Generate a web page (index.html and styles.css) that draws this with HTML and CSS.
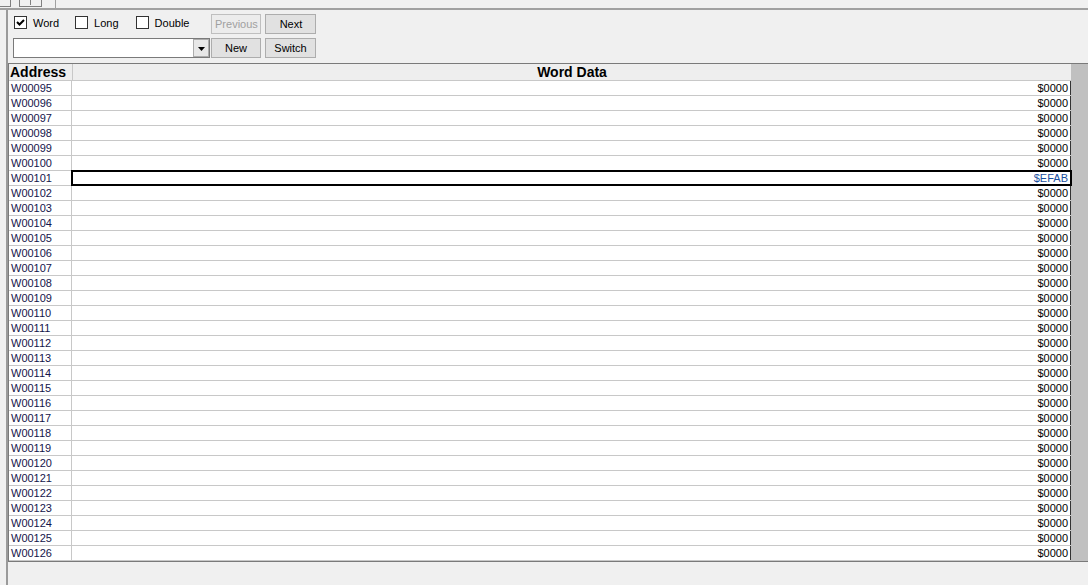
FILE: index.html
```html
<!DOCTYPE html>
<html>
<head>
<meta charset="utf-8">
<link rel="stylesheet" href="styles.css">
</head>
<body>
<div class="topstrip">
  <span class="tab tab1"></span>
  <span class="tab tab2"><i></i></span>
  <span class="vline"></span>
</div>
<div class="main">
  <div class="toolbar">
    <div class="tb-row">
      <label class="chk"><span class="box checked"><svg viewBox="0 0 11 11" width="11" height="11"><path d="M2 5 L4.5 7.5 L9 3" fill="none" stroke="#000" stroke-width="2"/></svg></span>Word</label>
      <label class="chk chk-long"><span class="box"></span>Long</label>
      <label class="chk chk-double"><span class="box"></span>Double</label>
      <button class="btn disabled">Previous</button>
      <button class="btn">Next</button>
    </div>
    <div class="tb-row row2">
      <div class="combo"><span class="combo-arrow"><svg viewBox="0 0 7 4" width="7" height="4"><path d="M0 0 H7 L3.5 4 Z" fill="#000"/></svg></span></div>
      <button class="btn">New</button>
      <button class="btn">Switch</button>
    </div>
  </div>
  <div class="grid">
    <div class="grid-body">
      <div class="hdr">
        <div class="c-addr">Address</div>
        <div class="c-data">Word Data</div>
      </div>
      <div id="rows"></div>
    </div>
    <div class="scroll"></div>
  </div>
</div>
<script src="app.js"></script>
</body>
</html>
```
FILE: app.js
```js
var rows = document.getElementById('rows');
var html = '';
for (var i = 95; i <= 126; i++) {
  var a = 'W' + String(i).padStart(5, '0');
  var sel = i === 101;
  html += '<div class="row' + (sel ? ' sel' : '') + '"><div class="c-addr">' + a + '</div><div class="c-data"><span>' + (sel ? '$EFAB' : '$0000') + '</span></div></div>';
}
rows.innerHTML = html;
```
FILE: styles.css
```css
html, body { margin: 0; padding: 0; }
body {
  background: #f0f0f0;
  font-family: "Liberation Sans", Arial, sans-serif;
  font-size: 11px;
  color: #000;
  width: 1088px;
  height: 585px;
  overflow: hidden;
}
.topstrip {
  height: 8px;
  border-bottom: 2px solid #a0a0a0;
  display: flex;
  align-items: flex-start;
}
.tab {
  display: block;
  height: 6px;
  border: 1px solid #808080;
  border-top: none;
  background: #f0f0f0;
  box-sizing: border-box;
}
.tab1 { width: 11px; margin-left: 0; border-left: none; height: 7px; }
.tab2 { width: 23px; margin-left: 8px; height: 7px; position: relative; }
.tab2 i { position: absolute; left: 10px; top: 0; width: 1px; height: 5px; background: #808080; }
.vline { display: block; width: 1px; height: 8px; background: #a0a0a0; margin-left: 13px; }
.main {
  margin-left: 6px;
  border-left: 2px solid #9a9a9a;
  height: 575px;
}
.toolbar { padding: 4px 0 0 5px; height: 49px; }
.tb-row { display: flex; align-items: center; height: 20px; }
.row2 { margin-top: 4px; }
.chk { display: flex; align-items: center; height: 16px; margin-top: -3px; }
.box {
  width: 13px; height: 13px; box-sizing: border-box;
  border: 1px solid #333;
  background: #fff;
  margin-right: 6px;
  display: flex; align-items: center; justify-content: center;
}
.chk:first-child { margin-left: 1px; }
.chk-long { margin-left: 16px; }
.chk-double { margin-left: 17px; }
.btn {
  font-family: "Liberation Sans", Arial, sans-serif;
  font-size: 11px;
  width: 51px; height: 20px;
  border: 1px solid #adadad;
  background: #e1e1e1;
  color: #000;
  padding: 0;
  margin: 0 0 0 4px;
}
.chk-double + .btn { margin-left: 22px; width: 50px; }
.btn.disabled { color: #a0a0a0; border-color: #bfbfbf; background: #ececec; }
.combo {
  width: 197px; height: 20px; box-sizing: border-box;
  border: 1px solid #7a7a7a;
  background: #fff;
  display: flex; justify-content: flex-end;
}
.combo-arrow {
  width: 16px; height: 18px; box-sizing: border-box;
  border: 1px solid #adadad;
  background: #e8e8e8;
  display: flex; align-items: center; justify-content: center;
  padding-top: 2px;
}
.combo + .btn { margin-left: 1px; width: 50px; }
.grid {
  border-top: 1px solid #7a7a7a;
  border-bottom: 1px solid #7a7a7a;
  display: flex;
  height: 497px;
}
.grid-body { width: 1062px; border-left: 1px solid #7a7a7a; }
.scroll { width: 17px; background: #c0c0c0; }
.hdr {
  display: flex; height: 16px; background: #eeeeee;
  border-bottom: 1px solid #c8c8c8;
  font-size: 14px; font-weight: bold;
  line-height: 16px;
}
.hdr .c-addr { width: 62px; padding-left: 1px; border-right: 1px solid #c8c8c8; }
.hdr .c-data { flex: 1; text-align: center; }
.row { display: flex; height: 14px; border-bottom: 1px solid #c8c8c8; line-height: 14px; }
.row .c-addr { width: 60px; padding-left: 2px; border-right: 1px solid #c8c8c8; color: #14144a; background: #fff; }
.row .c-data { flex: 1; text-align: right; background: #fff; padding-right: 2px; border-right: 1px solid #333; }
.row.sel .c-data { outline: 2px solid #000; outline-offset: -1px; color: #1a4fa0; position: relative; }
```
